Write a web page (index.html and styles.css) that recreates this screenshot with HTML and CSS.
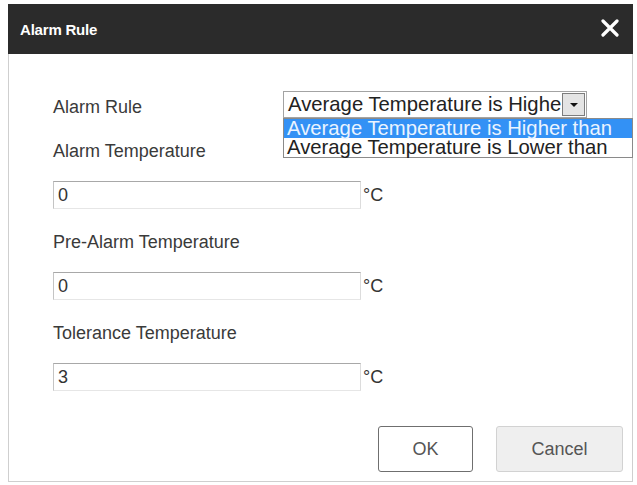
FILE: index.html
```html
<!DOCTYPE html>
<html lang="en">
<head>
  <meta charset="UTF-8" />
  <title>Alarm Rule</title>
  <link rel="stylesheet" href="styles.css">
</head>
<body>

<div class="dialog">
  <div class="dialog-head">
    <span class="dialog-title">Alarm Rule</span>
    <svg class="close-icon" viewBox="0 0 20 18" width="20" height="18">
      <path d="M3 2 L17 16 M17 2 L3 16" stroke="#fff" stroke-width="3.2" stroke-linecap="round" fill="none"/>
    </svg>
  </div>

  <div class="dialog-body">
    <div class="rule-row">
      <span class="label rule-label">Alarm Rule</span>
      <div class="select-wrap">
        <div class="select-box">
          <span class="select-text">Average Temperature is Higher than</span>
          <span class="select-arrow"></span>
        </div>
        <ul class="select-list">
          <li class="selected">Average Temperature is Higher than</li>
          <li>Average Temperature is Lower than</li>
        </ul>
      </div>
    </div>

    <div class="field">
      <div class="label">Alarm Temperature</div>
      <div class="input-row">
        <input class="text-input" value="0" />
        <span class="unit">°C</span>
      </div>
    </div>

    <div class="field">
      <div class="label">Pre-Alarm Temperature</div>
      <div class="input-row">
        <input class="text-input" value="0" />
        <span class="unit">°C</span>
      </div>
    </div>

    <div class="field">
      <div class="label">Tolerance Temperature</div>
      <div class="input-row">
        <input class="text-input" value="3" />
        <span class="unit">°C</span>
      </div>
    </div>

    <div class="actions">
      <button class="btn btn-ok">OK</button>
      <button class="btn btn-cancel">Cancel</button>
    </div>
  </div>
</div>

</body>
</html>
```

FILE: styles.css
```css
body {
  margin: 0;
  background: #fff;
  font-family: 'Liberation Sans', Arial, sans-serif;
  color: #333;
}

.dialog {
  width: 625px;
  margin: 4px 0 0 8px;
}

.dialog-head {
  display: flex;
  align-items: center;
  justify-content: space-between;
  height: 50px;
  padding: 0 13px 0 12px;
  background: #2b2b2b;
}

.dialog-title {
  color: #fff;
  font-size: 15px;
  font-weight: bold;
  letter-spacing: -0.2px;
}

.close-icon {
  display: block;
  margin-top: -3px;
}

.dialog-body {
  border: 1px solid #cfcfcf;
  border-top: none;
  padding: 37px 9px 9px 44px;
}

.label {
  font-size: 18px;
  line-height: 20px;
  color: #3a3a3a;
}

.rule-row {
  display: flex;
  align-items: center;
  height: 27px;
  margin-bottom: 4px;
}

.rule-label {
  width: 230px;
  margin-top: 5px;
}

.select-wrap {
  position: relative;
}

.select-box {
  position: relative;
  width: 304px;
  height: 27px;
  box-sizing: border-box;
  border: 1px solid #a3a3a3;
  background: #fff;
  overflow: hidden;
}

.select-text {
  display: block;
  width: 274px;
  padding-left: 4px;
  overflow: hidden;
  font-size: 20.3px;
  line-height: 25px;
  white-space: nowrap;
  color: #222;
}

.select-arrow {
  position: absolute;
  top: 1px;
  right: 1px;
  width: 23px;
  height: 23px;
  box-sizing: border-box;
  border: 1px solid #7d7d7d;
  background: #e4e4e4;
}

.select-arrow::after {
  content: '';
  position: absolute;
  left: 7px;
  top: 9px;
  border-left: 4px solid transparent;
  border-right: 4px solid transparent;
  border-top: 4px solid #111;
}

.select-list {
  position: absolute;
  top: 100%;
  left: 0;
  width: 350px;
  margin: 0;
  padding: 0;
  list-style: none;
  box-sizing: border-box;
  border: 1px solid #8a8a8a;
  background: #fff;
  z-index: 2;
}

.select-list li {
  padding-left: 3px;
  font-size: 20.3px;
  line-height: 19px;
  height: 19px;
  white-space: nowrap;
  color: #222;
}

.select-list li.selected {
  background: #3391f5;
  color: #eaf4ff;
}

.field {
  margin-top: 23px;
}

.input-row {
  display: flex;
  align-items: center;
  margin-top: 20px;
}

.text-input {
  width: 308px;
  height: 28px;
  box-sizing: border-box;
  margin: 0;
  padding: 0 4px;
  border: 1px solid #ccc;
  border-top-color: #a8a8a8;
  border-left-color: #c4c4c4;
  border-bottom-color: #e6e6e6;
  border-right-color: #dcdcdc;
  font-family: inherit;
  font-size: 18px;
  color: #333;
  outline: none;
}

.unit {
  margin-left: 2px;
  font-size: 18px;
  color: #333;
}

.actions {
  display: flex;
  justify-content: flex-end;
  gap: 23px;
  margin-top: 35px;
}

.btn {
  height: 46px;
  border-radius: 3px;
  font-family: inherit;
  font-size: 18px;
  color: #555;
  cursor: pointer;
}

.btn-ok {
  width: 95px;
  background: #fff;
  border: 1px solid #6f6f6f;
}

.btn-cancel {
  width: 127px;
  background: #efefef;
  border: 1px solid #d2d2d2;
}
```
